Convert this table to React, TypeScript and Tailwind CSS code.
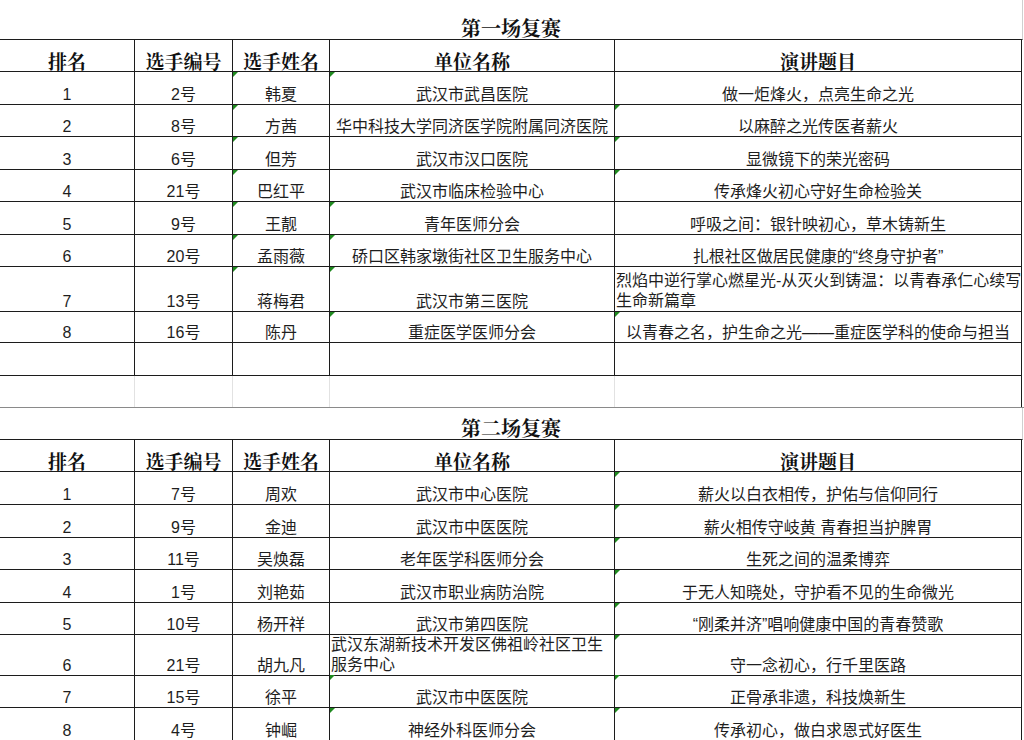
import React from "react";

type Row = {
  h: number;
  cells: React.ReactNode[];
  marks?: number[];
  left?: number[];
};

const BODY = { fontFamily: '"Liberation Sans", "Noto Sans CJK SC", sans-serif' };
const HEAD = { fontFamily: '"Noto Serif CJK SC", "Noto Sans CJK SC", serif' };

const GRID = "grid grid-cols-[135px_98px_97px_285px_407px]";

function Mark() {
  return (
    <span className="absolute left-0 top-0 h-0 w-0 border-r-[5px] border-t-[5px] border-r-transparent border-t-[#1f8a1f]" />
  );
}

function DataRow({ row }: { row: Row }) {
  return (
    <div className={GRID} style={{ height: row.h }}>
      {row.cells.map((c, i) => {
        const isLeft = row.left?.includes(i);
        return (
          <div
            key={i}
            className={`relative flex items-end border-b border-r border-[#1c1c1c] text-[16px] text-[#1e1e1e] ${
              isLeft ? "justify-start pl-[1px] leading-[20px]" : "justify-center leading-[18px]"
            } whitespace-nowrap`}
            style={BODY}
          >
            {row.marks?.includes(i) && <Mark />}
            <span>{c}</span>
          </div>
        );
      })}
    </div>
  );
}

function HeaderRow() {
  const heads = ["排名", "选手编号", "选手姓名", "单位名称", "演讲题目"];
  return (
    <div className={`${GRID} h-[32px]`}>
      {heads.map((h) => (
        <div
          key={h}
          className="flex items-end justify-center border-b border-r border-[#1c1c1c] text-[19px] font-bold leading-[21px] text-[#111]"
          style={HEAD}
        >
          {h}
        </div>
      ))}
    </div>
  );
}

function TitleRow({ text, h }: { text: string; h: number }) {
  return (
    <div
      className="flex w-[1023px] items-end justify-center border-b border-r border-[#1c1c1c] border-r-[#d0d0d0] text-[20px] font-bold leading-[23px] text-[#111]"
      style={{ ...HEAD, height: h }}
    >
      {text}
    </div>
  );
}

const t1: Row[] = [
  { h: 33, cells: ["1", "2号", "韩夏", "武汉市武昌医院", "做一炬烽火，点亮生命之光"], marks: [2, 3] },
  { h: 32, cells: ["2", "8号", "方茜", "华中科技大学同济医学院附属同济医院", "以麻醉之光传医者薪火"], marks: [2, 4] },
  { h: 33, cells: ["3", "6号", "但芳", "武汉市汉口医院", "显微镜下的荣光密码"], marks: [2, 4] },
  { h: 32, cells: ["4", "21号", "巴红平", "武汉市临床检验中心", "传承烽火初心守好生命检验关"], marks: [2, 4] },
  { h: 33, cells: ["5", "9号", "王靓", "青年医师分会", "呼吸之间：银针映初心，草木铸新生"], marks: [2, 3] },
  { h: 32, cells: ["6", "20号", "孟雨薇", "硚口区韩家墩街社区卫生服务中心", "扎根社区做居民健康的“终身守护者”"], marks: [2, 3] },
  {
    h: 45,
    cells: [
      "7",
      "13号",
      "蒋梅君",
      "武汉市第三医院",
      <>
        烈焰中逆行掌心燃星光-从灭火到铸温：以青春承仁心续写
        <br />
        生命新篇章
      </>,
    ],
    marks: [2, 3],
    left: [4],
  },
  { h: 31, cells: ["8", "16号", "陈丹", "重症医学医师分会", "以青春之名，护生命之光——重症医学科的使命与担当"], marks: [3, 4] },
  { h: 33, cells: ["", "", "", "", ""] },
];

const t2: Row[] = [
  { h: 33, cells: ["1", "7号", "周欢", "武汉市中心医院", "薪火以白衣相传，护佑与信仰同行"], marks: [4] },
  { h: 33, cells: ["2", "9号", "金迪", "武汉市中医医院", "薪火相传守岐黄 青春担当护脾胃"], marks: [4] },
  { h: 32, cells: ["3", "11号", "吴焕磊", "老年医学科医师分会", "生死之间的温柔博弈"], marks: [4] },
  { h: 33, cells: ["4", "1号", "刘艳茹", "武汉市职业病防治院", "于无人知晓处，守护看不见的生命微光"], marks: [4] },
  { h: 32, cells: ["5", "10号", "杨开祥", "武汉市第四医院", "“刚柔并济”唱响健康中国的青春赞歌"], marks: [4] },
  {
    h: 40,
    cells: [
      "6",
      "21号",
      "胡九凡",
      <>
        武汉东湖新技术开发区佛祖岭社区卫生
        <br />
        服务中心
      </>,
      "守一念初心，行千里医路",
    ],
    marks: [4],
    left: [3],
  },
  { h: 33, cells: ["7", "15号", "徐平", "武汉市中医医院", "正骨承非遗，科技焕新生"], marks: [3, 4] },
  { h: 33, cells: ["8", "4号", "钟崛", "神经外科医师分会", "传承初心，做白求恩式好医生"], marks: [3, 4] },
];

export default function App() {
  return (
    <div className="h-[740px] w-[1024px] overflow-hidden bg-white">
      <TitleRow text="第一场复赛" h={40} />
      <HeaderRow />
      {t1.map((r, i) => (
        <DataRow key={i} row={r} />
      ))}
      <div className={`${GRID} h-[32px] border-b border-[#8a8a8a]`}>
        {[0, 1, 2, 3, 4].map((i) => (
          <div key={i} className={`border-r ${i === 4 ? "border-[#1c1c1c]" : "border-[#e2e2e2]"}`} />
        ))}
      </div>
      <TitleRow text="第二场复赛" h={32} />
      <HeaderRow />
      {t2.map((r, i) => (
        <DataRow key={i} row={r} />
      ))}
    </div>
  );
}
